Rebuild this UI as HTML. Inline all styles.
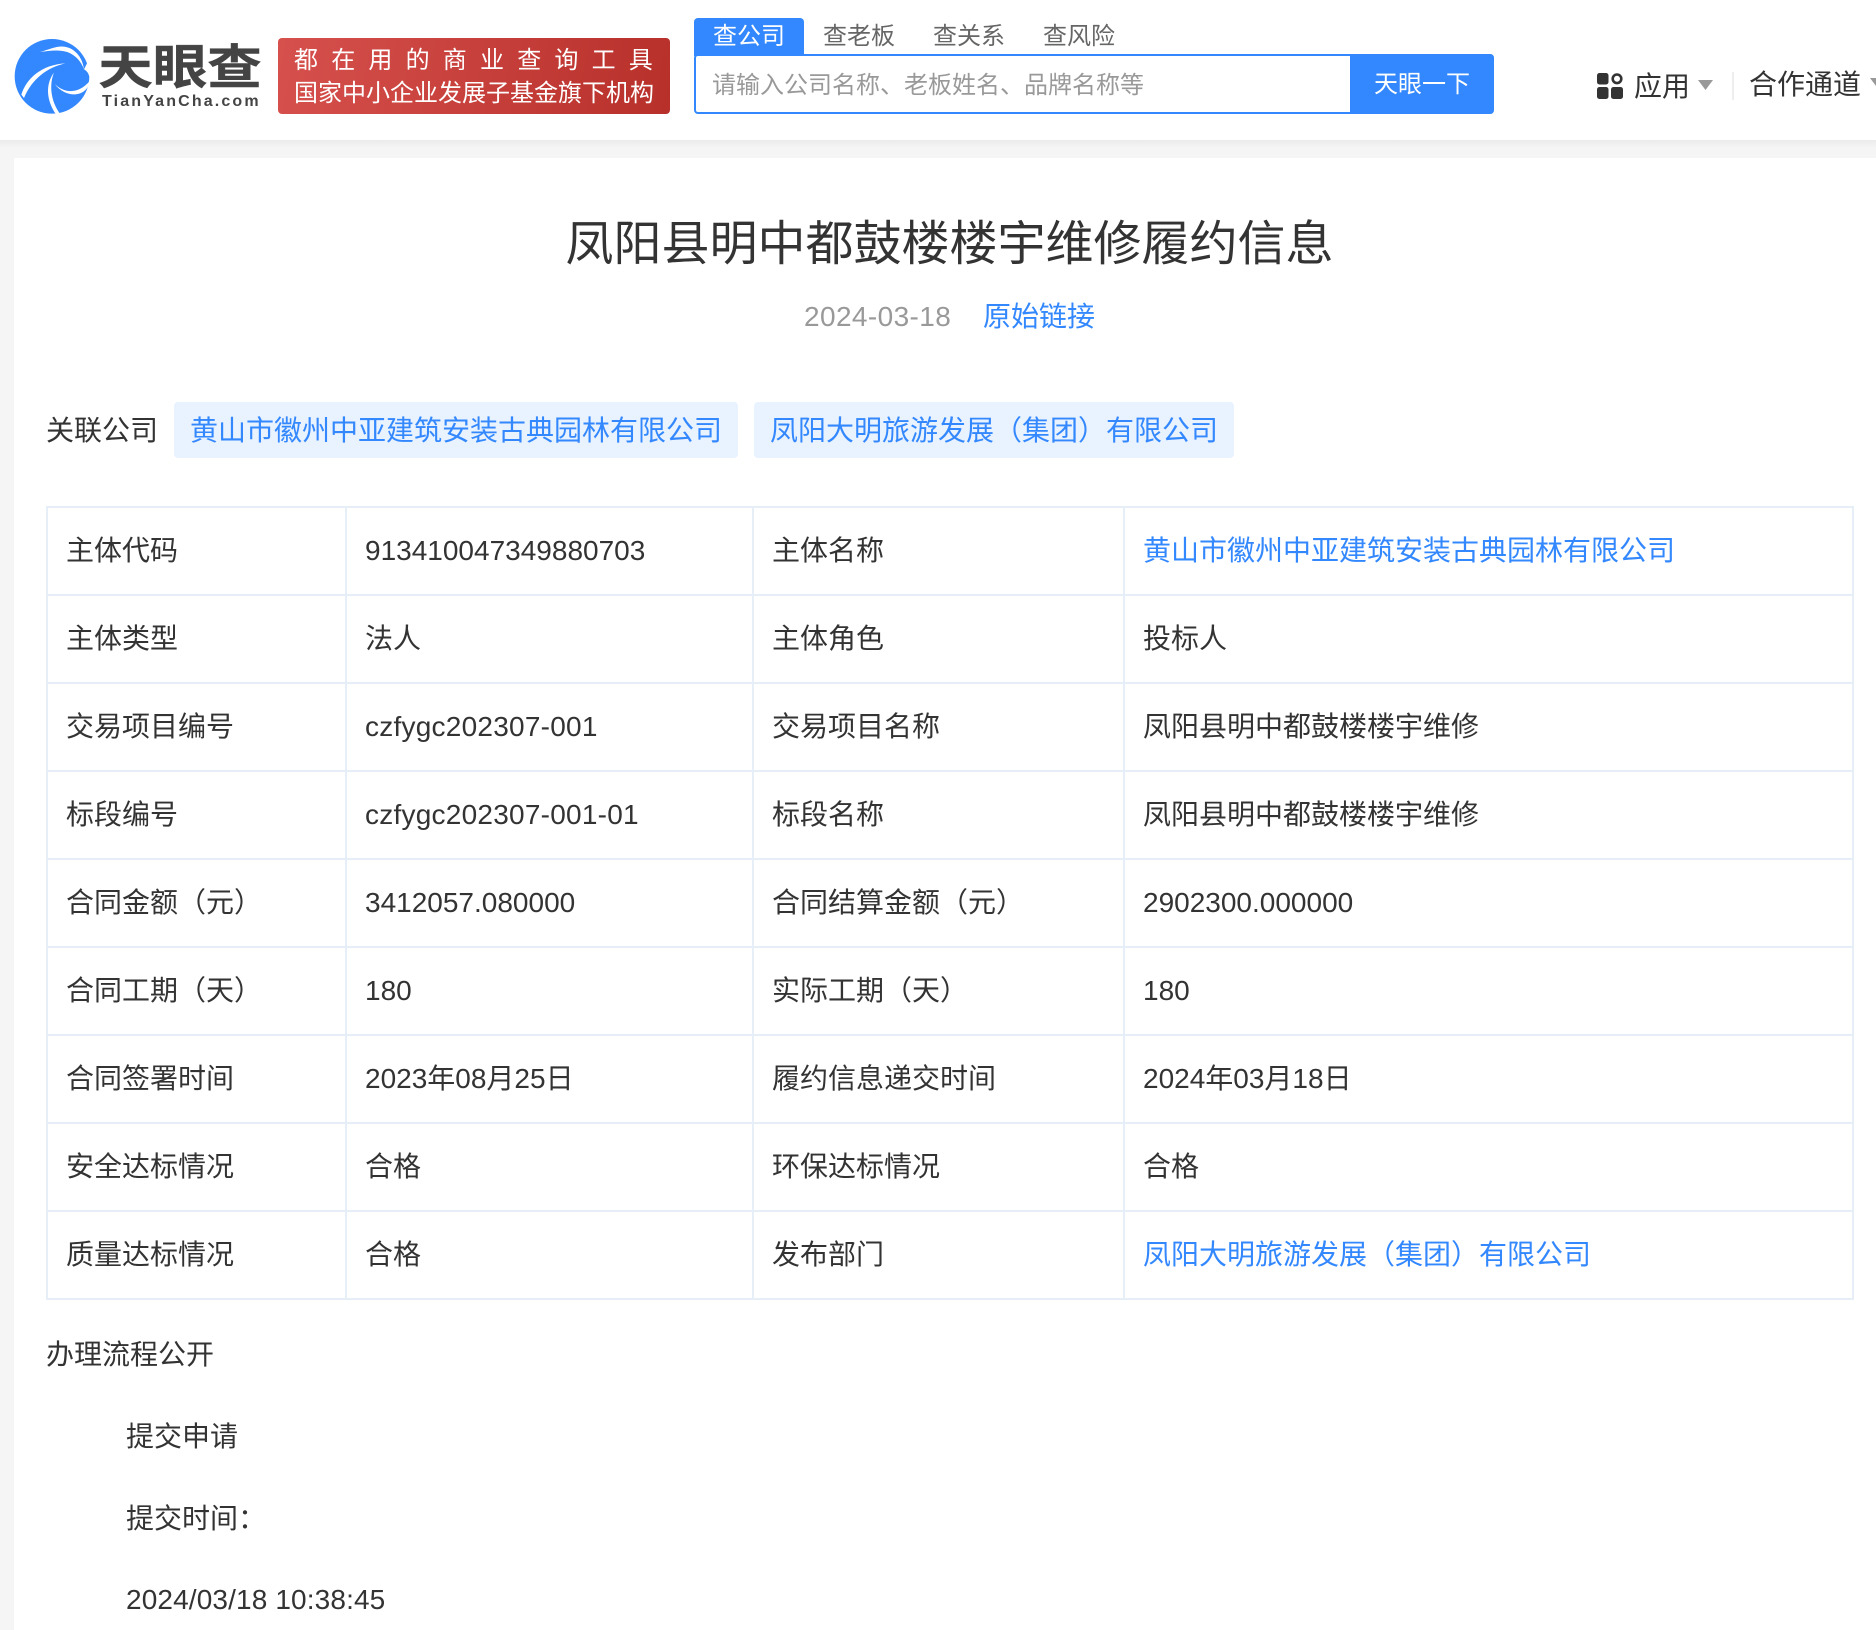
<!DOCTYPE html>
<html lang="zh-CN"><head><meta charset="utf-8"><title>凤阳县明中都鼓楼楼宇维修履约信息</title>
<style>
*{box-sizing:border-box;margin:0;padding:0}
html,body{width:1876px;height:1630px;overflow:hidden;background:#f5f5f5}
body{position:relative;font-family:"Liberation Sans","Noto Sans CJK SC",sans-serif;font-size:28px;color:#333}
.a{position:absolute;white-space:nowrap}
#hd{position:absolute;left:0;top:0;width:1876px;height:140px;background:#fff}
#sh{position:absolute;left:0;top:140px;width:1876px;height:8px;background:linear-gradient(#ebebeb,#f5f5f5)}
#main{position:absolute;left:14px;top:158px;width:1862px;height:1472px;background:#fff}
.blue{color:#3388ff}
table{position:absolute;left:46px;top:506px;border-collapse:separate;border-spacing:0;table-layout:fixed;width:1808px;border-top:2px solid #e6eff8;border-left:2px solid #e6eff8}
td{height:88px;border-right:2px solid #e6eff8;border-bottom:2px solid #e6eff8;padding:0 0 0 18px;line-height:40px;white-space:nowrap;vertical-align:middle}
td.n{letter-spacing:.24px}
.chip{position:absolute;top:402px;height:56px;line-height:58px;background:#e9f2ff;border-radius:4px;color:#3388ff;padding-left:16px;white-space:nowrap}
</style></head><body>
<div id="hd"></div><div id="sh"></div><div id="main"></div>

<svg class="a" style="left:10px;top:34px" width="84" height="84" viewBox="0 0 252 252">
<circle cx="126" cy="127" r="112" fill="#3388ff"/>
<path fill="#fff" d="M90 54C125 44 150 30 178 42C205 54 218 78 222 106C214 84 198 64 172 54C146 46 118 50 90 54Z"/>
<path fill="#fff" d="M222 106L240 70L252 70L252 130L238 128C236 118 230 110 222 106Z"/>
<path fill="#fff" d="M34 182C48 136 92 92 166 88C112 100 66 134 42 192Z"/>
<path fill="#fff" d="M132 116C118 150 120 200 152 242L140 244C108 200 106 150 132 116Z"/>
<path fill="#fff" d="M134 150C160 176 204 184 240 140C232 190 170 196 134 150Z"/>
</svg>
<div class="a" style="left:99px;top:26px;font-size:54px;line-height:76px;font-weight:700;color:#444;transform:scale(1.01,.88);-webkit-text-stroke:.5px #444;font-family:'Noto Sans CJK SC',sans-serif">天眼查</div>
<div class="a" style="left:102px;top:92px;font-size:16px;line-height:20px;font-weight:700;color:#444;letter-spacing:2.15px">TianYanCha.com</div>

<div class="a" style="left:278px;top:38px;width:392px;height:76px;border-radius:4px;background:linear-gradient(100deg,#d6504d,#b8302a)"></div>
<div class="a" style="left:294px;top:41px;font-size:24px;line-height:34px;color:#fff;letter-spacing:13.2px;font-family:'Noto Sans CJK SC',sans-serif">都在用的商业查询工具</div>
<div class="a" style="left:294px;top:74px;font-size:24px;line-height:34px;color:#fff;font-family:'Noto Sans CJK SC',sans-serif">国家中小企业发展子基金旗下机构</div>

<div class="a" style="left:694px;top:18px;width:110px;height:38px;background:#3388ff;border-radius:4px 4px 0 0"></div>
<div class="a" style="left:713px;top:19px;font-size:24px;line-height:36px;color:#fff">查公司</div>
<div class="a" style="left:823px;top:19px;font-size:24px;line-height:36px;color:#666">查老板</div>
<div class="a" style="left:933px;top:19px;font-size:24px;line-height:36px;color:#666">查关系</div>
<div class="a" style="left:1043px;top:19px;font-size:24px;line-height:36px;color:#666">查风险</div>
<div class="a" style="left:694px;top:54px;width:800px;height:60px;border:2px solid #3388ff;border-radius:4px;background:#fff"></div>
<div class="a" style="left:1350px;top:54px;width:144px;height:60px;background:#3388ff;border-radius:0 4px 4px 0"></div>
<div class="a" style="left:712px;top:68px;font-size:24px;line-height:36px;color:#999">请输入公司名称、老板姓名、品牌名称等</div>
<div class="a" style="left:1374px;top:67px;font-size:24px;line-height:36px;color:#fff">天眼一下</div>

<svg class="a" style="left:1597px;top:73px" width="26" height="26" viewBox="0 0 26 26">
<rect x="0" y="0" width="11.5" height="11.5" rx="2.5" fill="#333"/>
<circle cx="20" cy="5.8" r="4.3" fill="none" stroke="#333" stroke-width="2.6"/>
<rect x="0" y="14" width="11.5" height="12" rx="2.5" fill="#333"/>
<rect x="14" y="14" width="12" height="12" rx="2.5" fill="#333"/>
</svg>
<div class="a" style="left:1634px;top:67px;font-size:28px;line-height:40px;color:#333">应用</div>
<svg class="a" style="left:1698px;top:80px" width="15" height="10"><path d="M0 0H15L7.5 10Z" fill="#999"/></svg>
<div class="a" style="left:1732px;top:72px;width:2px;height:28px;background:#eee"></div>
<div class="a" style="left:1749px;top:65px;font-size:28px;line-height:40px;color:#333">合作通道</div>
<svg class="a" style="left:1870px;top:78px" width="15" height="10"><path d="M0 0H15L7.5 10Z" fill="#999"/></svg>

<div class="a" style="left:0;width:1898px;top:215px;padding-left:1px;text-align:center;font-size:48px;line-height:60px;color:#333">凤阳县明中都鼓楼楼宇维修履约信息</div>
<div class="a" style="left:804px;top:297px;font-size:28px;line-height:40px;color:#999;letter-spacing:.4px">2024-03-18</div>
<div class="a blue" style="left:983px;top:297px;font-size:28px;line-height:40px">原始链接</div>

<div class="a" style="left:46px;top:411px;line-height:40px">关联公司</div>
<div class="chip" style="left:174px;width:564px">黄山市徽州中亚建筑安装古典园林有限公司</div>
<div class="chip" style="left:754px;width:480px">凤阳大明旅游发展（集团）有限公司</div>

<table>
<colgroup><col style="width:299px"><col style="width:407px"><col style="width:371px"><col style="width:729px"></colgroup>
<tr><td>主体代码</td><td>913410047349880703</td><td>主体名称</td><td class="blue">黄山市徽州中亚建筑安装古典园林有限公司</td></tr>
<tr><td>主体类型</td><td>法人</td><td>主体角色</td><td>投标人</td></tr>
<tr><td>交易项目编号</td><td class="n">czfygc202307-001</td><td>交易项目名称</td><td>凤阳县明中都鼓楼楼宇维修</td></tr>
<tr><td>标段编号</td><td class="n">czfygc202307-001-01</td><td>标段名称</td><td>凤阳县明中都鼓楼楼宇维修</td></tr>
<tr><td>合同金额（元）</td><td>3412057.080000</td><td>合同结算金额（元）</td><td>2902300.000000</td></tr>
<tr><td>合同工期（天）</td><td>180</td><td>实际工期（天）</td><td>180</td></tr>
<tr><td>合同签署时间</td><td>2023年08月25日</td><td>履约信息递交时间</td><td>2024年03月18日</td></tr>
<tr><td>安全达标情况</td><td>合格</td><td>环保达标情况</td><td>合格</td></tr>
<tr><td>质量达标情况</td><td>合格</td><td>发布部门</td><td class="blue">凤阳大明旅游发展（集团）有限公司</td></tr>
</table>

<div class="a" style="left:46px;top:1335px;line-height:40px">办理流程公开</div>
<div class="a" style="left:126px;top:1417px;line-height:40px">提交申请</div>
<div class="a" style="left:126px;top:1499px;line-height:40px">提交时间：</div>
<div class="a" style="left:126px;top:1580px;line-height:40px;letter-spacing:.13px">2024/03/18 10:38:45</div>
</body></html>
